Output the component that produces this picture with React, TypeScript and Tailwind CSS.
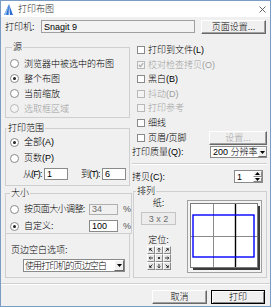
import React from "react";

function Radio({ checked = false, disabled = false }: { checked?: boolean; disabled?: boolean }) {
  return (
    <span
      className={`flex h-[9px] w-[9px] shrink-0 items-center justify-center rounded-full border ${
        disabled ? "border-[#b8b8b8] bg-[#f4f4f4]" : "border-[#8a8a8a] bg-white"
      }`}
    >
      {checked && <span className="h-[3px] w-[3px] rounded-full bg-[#222]" />}
    </span>
  );
}

function Check({ checked = false, disabled = false }: { checked?: boolean; disabled?: boolean }) {
  return (
    <span
      className={`flex h-[8px] w-[8px] shrink-0 items-center justify-center border ${
        disabled ? "border-[#b8b8b8] bg-[#f4f4f4]" : "border-[#8a8a8a] bg-white"
      }`}
    >
      {checked && (
        <svg width="6" height="6" viewBox="0 0 6 6">
          <path d="M0.8 3 L2.4 4.6 L5.2 1.2" fill="none" stroke={disabled ? "#a8a8a8" : "#222"} strokeWidth="1.1" />
        </svg>
      )}
    </span>
  );
}

function Btn({
  children,
  className = "",
  disabled = false,
  primary = false,
}: {
  children: React.ReactNode;
  className?: string;
  disabled?: boolean;
  primary?: boolean;
}) {
  return (
    <div
      className={`flex shrink-0 items-center justify-center whitespace-nowrap border bg-[#f0f0f0] ${
        primary
          ? "border-black shadow-[inset_1px_1px_0_#fff,inset_-1px_-1px_0_#8a8a8a]"
          : "border-t-white border-l-white border-b-[#696969] border-r-[#696969] shadow-[inset_-1px_-1px_0_#a0a0a0]"
      } ${disabled ? "text-[#a0a0a0]" : "text-black"} ${className}`}
    >
      {children}
    </div>
  );
}

function DownArrow() {
  return (
    <div className="flex h-full w-[10px] shrink-0 items-center justify-center border border-t-white border-l-white border-b-[#696969] border-r-[#696969] bg-[#f0f0f0]">
      <svg width="5" height="3" viewBox="0 0 5 3">
        <path d="M0 0 H5 L2.5 3 Z" fill="#000" />
      </svg>
    </div>
  );
}

function Field({ value, className = "", disabled = false }: { value: string; className?: string; disabled?: boolean }) {
  return (
    <div
      className={`flex shrink-0 items-center border pl-[2px] ${
        disabled ? "border-[#b0b0b0] bg-[#f0f0f0] text-[#6d6d6d]" : "border-[#8a8a8a] bg-white text-black"
      } ${className}`}
    >
      {value}
    </div>
  );
}

function PosButton({ deg }: { deg: number | null }) {
  return (
    <div className="flex h-[8px] w-[8px] items-center justify-center border border-t-white border-l-white border-b-[#8a8a8a] border-r-[#8a8a8a] bg-[#e6e6e6]">
      <svg width="6" height="6" viewBox="0 0 6 6">
        {deg === null ? (
          <circle cx="3" cy="3" r="1.1" fill="#111" />
        ) : (
          <g transform={`rotate(${deg} 3 3)`}>
            <path d="M3 5 V1.2 M1.6 2.6 L3 1.2 L4.4 2.6" fill="none" stroke="#111" strokeWidth="0.8" />
          </g>
        )}
      </svg>
    </div>
  );
}

export default function App() {
  const pos: (number | null)[] = [-45, 0, 45, -90, null, 90, -135, 180, 135];

  return (
    <div className="flex h-[307px] w-[271px] flex-col overflow-hidden border border-[#7b9cc4] bg-[#f0f0f0] font-['Liberation_Sans','Noto_Sans_CJK_SC',sans-serif] text-[9px] font-light leading-[10px] text-black">
      {/* title bar */}
      <div className="flex h-[16px] shrink-0 items-center bg-white pl-[3px] pr-[4px]">
        <svg width="9" height="11" viewBox="0 0 9 11">
          <path d="M5 0 L9 11 L0 11 Z" fill="#2f6fd0" />
          <path d="M5 0 L2.2 11 L0 11 Z" fill="#8fc0f4" />
          <path d="M5 0 L6 11 L4.6 11 Z" fill="#dbeaff" />
        </svg>
        <span className="ml-[5px] text-[#2b2b2b]">打印布图</span>
        <svg className="ml-auto" width="7" height="7" viewBox="0 0 7 7">
          <path d="M0.5 0.5 L6.5 6.5 M6.5 0.5 L0.5 6.5" stroke="#555" strokeWidth="0.9" />
        </svg>
      </div>

      {/* printer */}
      <div className="mt-[3px] flex h-[13px] shrink-0 items-center pl-[4px]">
        <span className="w-[36px]">打印机:</span>
        <Field value="Snagit 9" className="h-[13px] w-[154px] !border-[#a0a0a0] !bg-[#f3f3f3]" />
        <Btn className="ml-[6px] h-[14px] w-[65px]">页面设置...</Btn>
      </div>

      {/* main */}
      <div className="mt-[9px] flex shrink-0 pl-[4px]">
        {/* left column */}
        <div className="flex w-[125px] flex-col">
          <fieldset className="h-[76px] border border-[#cfcfcf] pl-[4px]">
            <legend className="ml-[2px] h-[10px] px-[1px]">源</legend>
            <div className="mt-[4px] flex flex-col">
              <label className="flex h-[15px] items-center gap-[5px]">
                <Radio />
                <span>浏览器中被选中的布图</span>
              </label>
              <label className="flex h-[15px] items-center gap-[5px]">
                <Radio checked />
                <span>整个布图</span>
              </label>
              <label className="flex h-[15px] items-center gap-[5px]">
                <Radio />
                <span>当前缩放</span>
              </label>
              <label className="flex h-[15px] items-center gap-[5px] text-[#a0a0a0]">
                <Radio disabled />
                <span>选取框区域</span>
              </label>
            </div>
          </fieldset>

          <fieldset className="mt-[5px] h-[63px] border border-[#cfcfcf] pl-[4px]">
            <legend className="-ml-[3px] h-[10px] px-[1px]">打印范围</legend>
            <div className="mt-[1px] flex flex-col">
              <label className="flex h-[16px] items-center gap-[5px]">
                <Radio checked />
                <span>全部(A)</span>
              </label>
              <label className="flex h-[16px] items-center gap-[5px]">
                <Radio />
                <span>页数(P)</span>
              </label>
              <div className="flex h-[16px] items-center pl-[13px]">
                <span className="w-[21px] shrink-0 whitespace-nowrap tracking-[-0.9px]">从(F):</span>
                <Field value="1" className="h-[12px] w-[24px]" />
                <span className="ml-[13px] w-[21px] shrink-0 whitespace-nowrap tracking-[-0.9px]">到(T):</span>
                <Field value="6" className="h-[12px] w-[24px]" />
              </div>
            </div>
          </fieldset>

          <fieldset className="mt-[2px] h-[46px] border border-[#cfcfcf] pl-[4px]">
            <legend className="h-[10px] px-[1px]">大小</legend>
            <div className="mt-[5px] flex h-[12px] items-center">
              <Radio />
              <span className="ml-[5px] w-[65px] shrink-0 whitespace-nowrap tracking-[-0.6px]">按页面大小调整:</span>
              <Field value="34" disabled className="h-[11px] w-[29px]" />
              <span className="ml-[5px] text-[#555]">%</span>
            </div>
            <div className="mt-[5px] flex h-[12px] items-center">
              <Radio checked />
              <span className="ml-[5px] w-[65px] shrink-0 whitespace-nowrap">自定义:</span>
              <Field value="100" className="h-[12px] w-[29px]" />
              <span className="ml-[5px] text-[#555]">%</span>
            </div>
          </fieldset>
          <div className="h-[44px] border border-t-0 border-[#cfcfcf] pl-[17px]">
            <div className="-ml-[12px] mt-[11px] h-[10px]">页边空白选项:</div>
            <div className="mt-[4px] flex h-[13px] w-[102px] items-center overflow-hidden border border-[#8a8a8a] bg-white pl-[1px]">
              <span className="flex-1 whitespace-nowrap tracking-[-0.9px]">使用打印机的页边空白</span>
              <DownArrow />
            </div>
          </div>
        </div>

        {/* right column */}
        <div className="ml-[2px] flex w-[135px] flex-col">
          <div className="mt-[1px] flex flex-col pl-[5px]">
            <label className="flex h-[14.5px] items-center gap-[3px]">
              <Check />
              <span>打印到文件(L)</span>
            </label>
            <label className="flex h-[14.5px] items-center gap-[3px] text-[#a0a0a0]">
              <Check checked disabled />
              <span>校对检查拷贝(O)</span>
            </label>
            <label className="flex h-[14.5px] items-center gap-[3px]">
              <Check />
              <span>黑白(B)</span>
            </label>
            <label className="flex h-[14.5px] items-center gap-[3px] text-[#a0a0a0]">
              <Check disabled />
              <span>抖动(D)</span>
            </label>
            <label className="flex h-[14.5px] items-center gap-[3px] text-[#a0a0a0]">
              <Check disabled />
              <span>打印参考</span>
            </label>
            <label className="flex h-[14.5px] items-center gap-[3px]">
              <Check />
              <span>细线</span>
            </label>
            <div className="flex h-[15px] items-center gap-[3px]">
              <Check />
              <span>页眉/页脚</span>
              <Btn disabled className="ml-auto h-[14px] w-[58px]">设置...</Btn>
            </div>
          </div>

          <div className="mt-[1px] flex h-[12px] items-center">
            <span className="whitespace-nowrap">打印质量(Q):</span>
            <div className="ml-auto flex h-[12px] w-[57px] items-center overflow-hidden border border-[#8a8a8a] bg-white pl-[2px]">
              <span className="flex-1 whitespace-nowrap">200 分辨率</span>
              <DownArrow />
            </div>
          </div>

          <div className="mt-[5px] h-[2px] border-t border-b border-t-[#cfcfcf] border-b-white" />

          <div className="mt-[5px] flex h-[13px] items-center">
            <span>拷贝(C):</span>
            <div className="ml-auto mr-[4px] flex h-[13px] w-[29px] items-stretch border border-[#8a8a8a] bg-white">
              <span className="flex flex-1 items-center pl-[2px]">1</span>
              <div className="flex w-[9px] flex-col">
                <div className="flex flex-1 items-center justify-center border border-t-white border-l-white border-b-[#8a8a8a] border-r-[#8a8a8a] bg-[#f0f0f0]">
                  <svg width="5" height="3" viewBox="0 0 5 3">
                    <path d="M0 3 H5 L2.5 0 Z" fill="#000" />
                  </svg>
                </div>
                <div className="flex flex-1 items-center justify-center border border-t-white border-l-white border-b-[#8a8a8a] border-r-[#8a8a8a] bg-[#f0f0f0]">
                  <svg width="5" height="3" viewBox="0 0 5 3">
                    <path d="M0 0 H5 L2.5 3 Z" fill="#000" />
                  </svg>
                </div>
              </div>
            </div>
          </div>

          <fieldset className="mt-[3px] ml-[1px] h-[92px] border border-[#cfcfcf] pl-[2px]">
            <legend className="h-[10px] px-[1px]">排列</legend>
            <div className="flex">
              <div className="ml-[5px] flex w-[35px] flex-col items-center">
                <div className="mt-[2px] h-[10px]">纸:</div>
                <div className="mt-[4px] flex h-[13px] w-[35px] items-center justify-center border border-[#c4c4c4] bg-[#ececec] text-[#6d6d6d]">
                  3 x 2
                </div>
                <div className="mt-[10px] h-[10px]">定位:</div>
                <div className="mt-[1px] grid grid-cols-3">
                  {pos.map((d, i) => (
                    <PosButton key={i} deg={d} />
                  ))}
                </div>
              </div>

              <div className="ml-[11px] mt-[4px] h-[73px] w-[75px] border border-[#a0a0a0] bg-[#f4f4f4]">
                <svg width="73" height="71" viewBox="0 0 73 71">
                  <rect x="5" y="5" width="67" height="64" fill="#3a3a3a" />
                  <rect x="2.5" y="2.5" width="67" height="64" fill="#fff" stroke="#7a7a7a" />
                  <line x1="25.5" y1="3" x2="25.5" y2="66" stroke="#8a8a8a" strokeWidth="1" />
                  <line x1="3" y1="35.5" x2="69" y2="35.5" stroke="#8a8a8a" strokeWidth="1" />
                  <line x1="47.5" y1="3" x2="47.5" y2="66" stroke="#000" strokeWidth="1.4" />
                  <rect x="5" y="14" width="61" height="42" fill="none" stroke="#0000ff" strokeWidth="1.4" />
                </svg>
              </div>
            </div>
          </fieldset>
        </div>
      </div>

      {/* separator */}
      <div className="mt-[5px] h-[2px] shrink-0 border-t border-b border-t-[#cfcfcf] border-b-white" />

      {/* buttons */}
      <div className="mt-[5px] flex shrink-0 justify-end gap-[4px] pr-[5px]">
        <Btn className="h-[14px] w-[55px]">取消</Btn>
        <Btn primary className="h-[14px] w-[54px]">打印</Btn>
      </div>
    </div>
  );
}
